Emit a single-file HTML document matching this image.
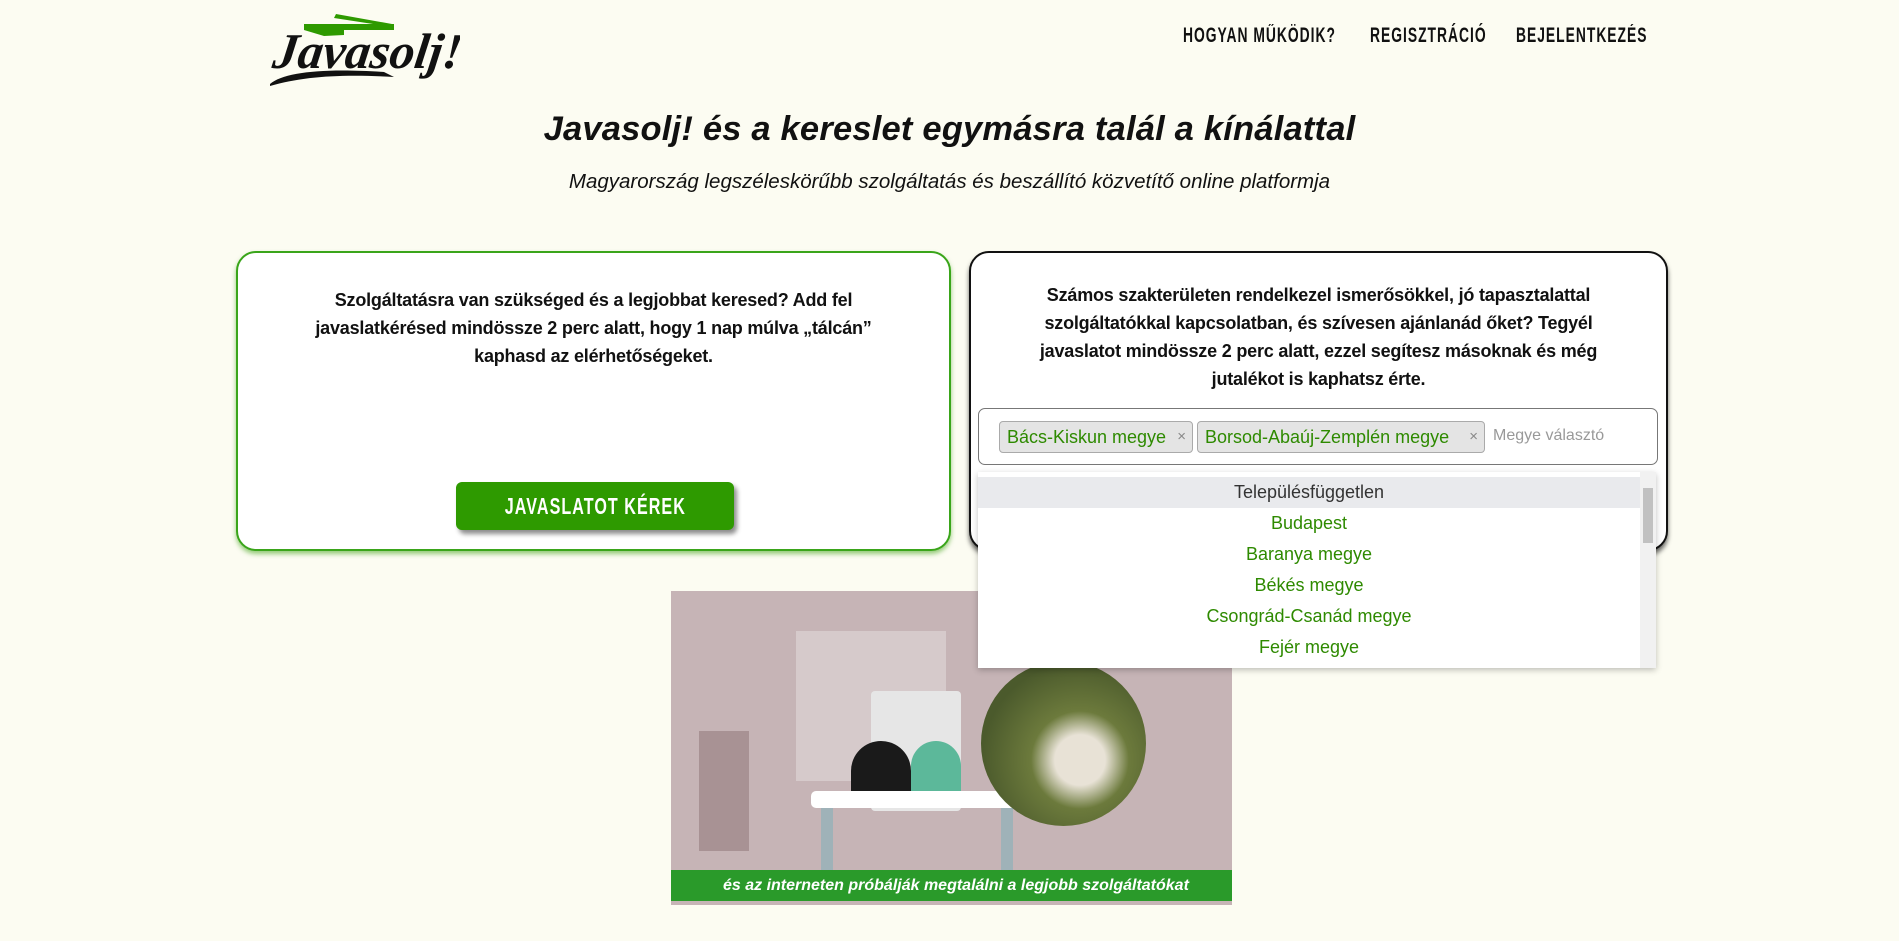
<!DOCTYPE html>
<html><head><meta charset="utf-8"><style>
*{margin:0;padding:0;box-sizing:border-box}
body{width:1899px;height:941px;background:#fcfcf2;font-family:"Liberation Sans",sans-serif;position:relative;overflow:hidden;color:#111}
.abs{position:absolute}
.nav{top:24px;font-weight:bold;font-size:21px;letter-spacing:1.5px;color:#111;transform:scaleX(0.66);transform-origin:0 0;white-space:nowrap}
h1{position:absolute;top:110px;left:0;width:1899px;text-align:center;font-size:34.5px;font-style:italic;font-weight:bold;letter-spacing:0.2px}
.sub{top:170px;left:0;width:1899px;text-align:center;font-size:20.5px;font-style:italic}
.card{position:absolute;top:251px;height:300px;border-radius:20px;background:#fff;overflow:hidden}
.card p{position:absolute;text-align:center;font-weight:bold;line-height:28px;font-size:18px;letter-spacing:-0.2px}
.btn{position:absolute;left:218px;top:229px;width:278px;height:48px;background:#2e9a00;border-radius:6px;box-shadow:3px 4px 5px rgba(0,0,0,.45);color:#fff;text-align:center;line-height:48px}
.btn span{display:inline-block;font-weight:bold;font-size:23px;letter-spacing:1.5px;transform:scaleX(0.7)}
.tag{position:absolute;top:12px;height:32px;background:#e4e4e4;border:1px solid #aaa;border-radius:4px;color:#2e8a00;font-size:18px;line-height:30px;padding-left:7px}
.tag span{position:absolute;right:6px;color:#888;font-size:15px}
.dd{position:absolute;left:978px;top:472px;width:678px;height:196px;background:#fff;box-shadow:0 2px 6px rgba(0,0,0,.25);overflow:hidden}
.it{height:31px;line-height:31px;text-align:center;color:#2e8a00;font-size:18px;width:662px}
</style></head><body>
<svg class="abs" style="left:264px;top:6px" width="196" height="82" viewBox="0 0 196 82">
<polygon points="40,18 130,18 130,24 40,24" fill="#2e9a00"/>
<polygon points="72,8 128,18 122,20 70,12" fill="#2e9a00"/>
<polygon points="40,24 80,24 80,29 60,30" fill="#2e9a00"/>
<text x="16" y="62" font-family="Liberation Serif,serif" font-style="italic" font-weight="bold" font-size="50" fill="#111" transform="skewX(-8)">Javasolj!</text>
<path d="M6,78 C20,66 60,62 120,66 L130,71 C80,68 40,70 6,80Z" fill="#111"/>
</svg>
<div class="abs nav" style="left:1183px">HOGYAN MŰKÖDIK?</div>
<div class="abs nav" style="left:1370px">REGISZTRÁCIÓ</div>
<div class="abs nav" style="left:1516px">BEJELENTKEZÉS</div>
<h1>Javasolj! és a kereslet egymásra talál a kínálattal</h1>
<div class="abs sub">Magyarország legszéleskörűbb szolgáltatás és beszállító közvetítő online platformja</div>

<div class="card" style="left:236px;width:715px;border:2px solid #3aa51a;box-shadow:0 3px 5px rgba(46,154,0,.5)">
<p style="left:50px;width:611px;top:33px">Szolgáltatásra van szükséged és a legjobbat keresed? Add fel javaslatkérésed mindössze 2 perc alatt, hogy 1 nap múlva „tálcán” kaphasd az elérhetőségeket.</p>
<div class="btn"><span>JAVASLATOT KÉREK</span></div>
</div>

<div class="card" style="left:969px;width:699px;border:2px solid #111;box-shadow:0 4px 5px rgba(0,0,0,.6)">
<p style="left:50px;width:595px;top:28px">Számos szakterületen rendelkezel ismerősökkel, jó tapasztalattal szolgáltatókkal kapcsolatban, és szívesen ajánlanád őket? Tegyél javaslatot mindössze 2 perc alatt, ezzel segítesz másoknak és még jutalékot is kaphatsz érte.</p>
<div style="position:absolute;left:7px;top:155px;width:680px;height:57px;border:1px solid #777;border-radius:7px;background:#fff">
<div class="tag" style="left:20px;width:194px">Bács-Kiskun megye<span>×</span></div>
<div class="tag" style="left:218px;width:288px">Borsod-Abaúj-Zemplén megye<span>×</span></div>
<div style="position:absolute;left:514px;top:18px;color:#999;font-size:16px">Megye választó</div>
</div>
</div>

<div class="abs" style="left:671px;top:591px;width:561px;height:314px;background:#c6b4b6;overflow:hidden">
<div class="abs" style="left:125px;top:40px;width:150px;height:150px;background:#d6cacb"></div>
<div class="abs" style="left:200px;top:100px;width:90px;height:120px;background:#e6e6e6;border-radius:4px"></div>
<div class="abs" style="left:180px;top:150px;width:60px;height:60px;background:#1a1a1a;border-radius:30px 30px 0 0"></div>
<div class="abs" style="left:240px;top:150px;width:50px;height:60px;background:#5cb89a;border-radius:25px 25px 0 0"></div>
<div class="abs" style="left:140px;top:200px;width:210px;height:17px;background:#fff;border-radius:5px"></div>
<div class="abs" style="left:150px;top:217px;width:12px;height:80px;background:#9fb2b8"></div>
<div class="abs" style="left:330px;top:217px;width:12px;height:80px;background:#9fb2b8"></div>
<div class="abs" style="left:28px;top:140px;width:50px;height:120px;background:#a89294"></div>
<div class="abs" style="left:310px;top:70px;width:165px;height:165px;border-radius:50%;background:radial-gradient(circle at 60% 60%,#e8e2d6 0 18%,#6c7a3c 35%,#4b5a2c 70%)"></div>
<div class="abs" style="left:0;top:279px;width:561px;height:31px;background:#2a9a2a;color:#fff;font-weight:bold;font-style:italic;font-size:16px;line-height:31px;padding-left:52px">és az interneten próbálják megtalálni a legjobb szolgáltatókat</div>
</div>

<div class="dd">
<div style="height:5px"></div>
<div class="it" style="background:#e9eaed;color:#333;height:31px">Településfüggetlen</div>
<div class="it">Budapest</div>
<div class="it">Baranya megye</div>
<div class="it">Békés megye</div>
<div class="it">Csongrád-Csanád megye</div>
<div class="it">Fejér megye</div>
<div style="position:absolute;right:0;top:0;width:16px;height:196px;background:#f1f1f1"></div>
<div style="position:absolute;right:3px;top:16px;width:10px;height:55px;background:#c1c1c1"></div>
</div>
</body></html>
